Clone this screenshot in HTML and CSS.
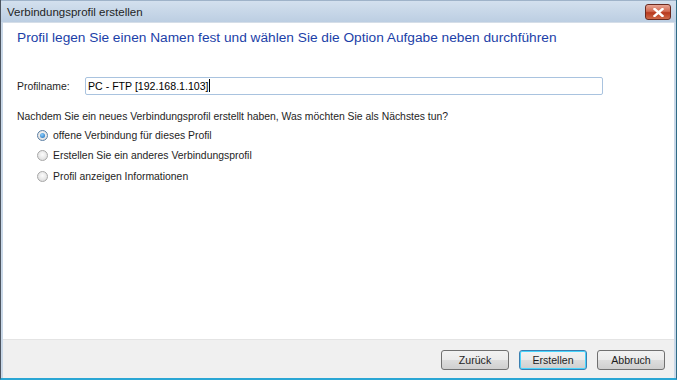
FILE: index.html
```html
<!DOCTYPE html>
<html lang="de">

<head>
  <meta charset="UTF-8" />
  <title>Verbindungsprofil erstellen</title>
  <link rel="stylesheet" href="styles.css">
</head>

<body>
  <div class="window">
    <div class="titlebar">
      <span class="title">Verbindungsprofil erstellen</span>
      <button type="button" class="close-btn">
        <svg width="11" height="9" viewBox="0 0 11 9">
          <path d="M1.5 1 L9.5 8 M9.5 1 L1.5 8" stroke="#fff" stroke-width="2.4" stroke-linecap="square" />
        </svg>
      </button>
    </div>

    <div class="content">
      <h1>Profil legen Sie einen Namen fest und wählen Sie die Option Aufgabe neben durchführen</h1>

      <div class="form-row">
        <label for="profileName">Profilname:</label>
        <div class="text-input" id="profileName">PC - FTP [192.168.1.103]<span class="caret"></span></div>
      </div>

      <p class="question">Nachdem Sie ein neues Verbindungsprofil erstellt haben, Was möchten Sie als Nächstes tun?</p>

      <div class="options">
        <label class="option"><span class="radio checked"></span>offene Verbindung für dieses Profil</label>
        <label class="option"><span class="radio"></span>Erstellen Sie ein anderes Verbindungsprofil</label>
        <label class="option"><span class="radio"></span>Profil anzeigen Informationen</label>
      </div>
    </div>

    <div class="footer">
      <button type="button" class="btn">Zurück</button>
      <button type="button" class="btn default">Erstellen</button>
      <button type="button" class="btn">Abbruch</button>
    </div>
  </div>
</body>

</html>
```

FILE: styles.css
```css
* {
  box-sizing: border-box;
}

body {
  margin: 0;
  width: 677px;
  height: 380px;
  font-family: 'Liberation Sans', Arial, sans-serif;
  font-size: 10.4px;
  color: #1e1e1e;
  background: #fff;
}

.window {
  width: 677px;
  height: 380px;
  display: flex;
  flex-direction: column;
  border-left: 1px solid #4d5560;
  border-right: 1px solid #2f6b86;
  border-bottom: 2px solid #2aa6d4;
  background: #c9d8e8;
  padding: 0 2px;
}

.titlebar {
  height: 22px;
  flex: none;
  display: flex;
  align-items: center;
  justify-content: space-between;
  margin: 0 -2px;
  padding: 0 5px 0 6px;
  background: linear-gradient(#d3e0ee, #bccee2);
  border-top: 1px solid #9fb3c9;
}

.title {
  font-size: 11.5px;
  color: #1f1f1f;
}

.close-btn {
  width: 26px;
  height: 16px;
  margin-top: 1px;
  padding: 0;
  border: 1px solid #6b2a20;
  border-radius: 3px;
  background: linear-gradient(#e8a595 0%, #d16a52 45%, #b8391e 55%, #cf6a4a 100%);
  display: flex;
  align-items: center;
  justify-content: center;
}

.content {
  flex: 1;
  background: #fff;
  padding: 5px 14px 0 14px;
  border-top: 1px solid #d5dee8;
}

h1 {
  margin: 0 0 29px;
  font-size: 13.7px;
  font-weight: normal;
  color: #1c3fa8;
  line-height: 20px;
}

.form-row {
  display: flex;
  align-items: center;
  margin-bottom: 14px;
}

.form-row label {
  width: 68px;
}

.text-input {
  width: 518px;
  height: 18px;
  border: 1px solid #a9c3df;
  border-radius: 2px;
  padding: 1px 2px;
  font-size: 10.6px;
  line-height: 14px;
  color: #000;
}

.caret {
  display: inline-block;
  width: 1px;
  height: 13px;
  background: #000;
  vertical-align: -2px;
}

.question {
  margin: 0;
  line-height: 16px;
}

.options {
  padding-left: 20px;
  display: flex;
  flex-direction: column;
}

.option {
  display: flex;
  align-items: center;
  height: 20.5px;
}

.radio {
  width: 11px;
  height: 11px;
  border-radius: 50%;
  border: 1px solid #a7a7a7;
  background: radial-gradient(circle at 50% 40%, #fcfcfc, #d6d6d6);
  margin-right: 5px;
  position: relative;
}

.radio.checked {
  border-color: #5c7fa4;
}

.radio.checked::after {
  content: '';
  position: absolute;
  left: 2px;
  top: 2px;
  width: 5px;
  height: 5px;
  border-radius: 50%;
  background: radial-gradient(circle at 40% 35%, #8cd0ff, #1665b4);
}

.footer {
  flex: none;
  height: 39px;
  background: #f0f0f0;
  border-top: 1px solid #e4e4e4;
  display: flex;
  justify-content: flex-end;
  align-items: center;
  gap: 10px;
  padding: 2px 9px 0 0;
}

.btn {
  width: 68px;
  height: 20px;
  font-family: inherit;
  font-size: 10.6px;
  color: #1e1e1e;
  border: 1px solid #707070;
  border-radius: 3px;
  background: linear-gradient(#f2f2f2 0%, #ebebeb 50%, #dddddd 51%, #cfcfcf 100%);
  padding: 0;
}

.btn.default {
  border-color: #3c7fb1;
  box-shadow: inset 0 0 0 1px #48d4fd;
}
```
